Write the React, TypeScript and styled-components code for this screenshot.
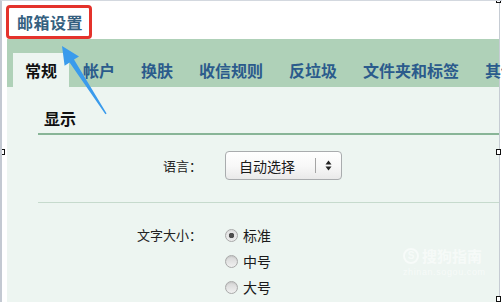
import React from "react";
import styled, { createGlobalStyle } from "styled-components";

const GlobalStyle = createGlobalStyle`
  html, body {
    margin: 0;
    padding: 0;
    background: #ffffff;
  }
  body {
    font-family: "Noto Sans CJK SC", "Noto Sans", sans-serif;
  }
`;

const Frame = styled.div`
  position: relative;
  width: 502px;
  height: 302px;
  overflow: hidden;
  box-sizing: border-box;
  border-top: 1px solid #d3d8df;
  border-left: 2px solid #c3c9d2;
  background: #ffffff;
`;

const Page = styled.div`
  width: 498px;
  height: 100%;
  box-sizing: border-box;
  border-right: 1px solid #c6ccd4;
  display: flex;
  flex-direction: column;
`;

const Header = styled.div`
  height: 38px;
  padding: 4px 0 0 4px;
  box-sizing: border-box;
  display: flex;
  align-items: flex-start;
`;

const TitleBox = styled.div`
  height: 34px;
  box-sizing: border-box;
  border: 3px solid #e4322b;
  border-radius: 4px;
  padding: 0 6px 0 8px;
  display: flex;
  align-items: center;
`;

const Title = styled.h1`
  margin: 0;
  font-size: 16px;
  font-weight: 700;
  color: #35607f;
  letter-spacing: 0.5px;
`;

const Main = styled.div`
  flex: 1;
  margin-left: 5px;
  display: flex;
  flex-direction: column;
`;

const TabBar = styled.div`
  height: 48px;
  box-sizing: border-box;
  padding: 14px 0 0 6px;
  background: #afd1b8;
  display: flex;
  align-items: flex-end;
  gap: 2px;
  white-space: nowrap;
`;

const Tab = styled.div<{ $active?: boolean }>`
  height: 34px;
  line-height: 34px;
  padding: 0 12px;
  font-size: 16px;
  font-weight: 700;
  color: ${(p) => (p.$active ? "#111111" : "#2b5b8c")};
  background: ${(p) => (p.$active ? "#edf5f1" : "transparent")};
`;

const Content = styled.div`
  flex: 1;
  background: #edf5f1;
  padding-left: 31px;
`;

const SectionHead = styled.div`
  padding: 20px 0 4px 6px;
  font-size: 16px;
  font-weight: 700;
  line-height: 22px;
  color: #111111;
  border-bottom: 2px solid #88b597;
`;

const Row = styled.div<{ $padTop: number; $padBottom: number; $divider?: boolean }>`
  display: grid;
  grid-template-columns: 164px 1fr;
  column-gap: 23px;
  padding-top: ${(p) => p.$padTop}px;
  padding-bottom: ${(p) => p.$padBottom}px;
  border-bottom: ${(p) => (p.$divider ? "1px solid #c6dacd" : "none")};
`;

const Label = styled.div<{ $h: number }>`
  text-align: right;
  font-size: 13px;
  line-height: ${(p) => p.$h}px;
  color: #222222;
`;

const Select = styled.div`
  width: 117px;
  height: 29px;
  box-sizing: border-box;
  border: 1px solid #a9acae;
  border-radius: 4px;
  background: linear-gradient(#ffffff, #f7f7f7 55%, #e9e9e9);
  display: flex;
  align-items: center;
  padding-left: 13px;
  font-size: 14px;
  color: #1a1a1a;
`;

const SelectText = styled.span`
  flex: 1;
`;

const SelectSep = styled.span`
  width: 1px;
  height: 15px;
  background: #a5a5a5;
  margin-right: 9px;
`;

const Arrows = styled.svg`
  margin-right: 9px;
`;

const Options = styled.div`
  display: flex;
  flex-direction: column;
`;

const Option = styled.label`
  height: 26px;
  display: flex;
  align-items: center;
  gap: 5px;
  font-size: 14px;
  color: #1a1a1a;
`;

const Radio = styled.span<{ $checked?: boolean }>`
  width: 13px;
  height: 13px;
  box-sizing: border-box;
  border-radius: 50%;
  border: 1px solid #a9a9a9;
  background: ${(p) =>
    p.$checked
      ? "radial-gradient(circle, #4d4d4d 0 2.5px, #e4e4e4 3px, #f4f4f4 100%)"
      : "linear-gradient(#d6d6d6, #f0f0f0)"};
  box-shadow: inset 0 1px 1px rgba(0, 0, 0, 0.08);
`;

const Arrow = styled.svg`
  position: absolute;
  left: 0;
  top: 0;
  pointer-events: none;
`;

const Watermark = styled.div`
  position: absolute;
  left: 401px;
  top: 246px;
  color: rgba(255, 255, 255, 0.55);
  display: flex;
  flex-direction: column;
  gap: 2px;
`;

const MarkTop = styled.div`
  display: flex;
  align-items: center;
  gap: 3px;
  font-size: 15px;
  font-weight: 700;
  line-height: 18px;
`;

const MarkLogo = styled.span`
  width: 16px;
  height: 16px;
  border-radius: 50%;
  border: 2px solid rgba(255, 255, 255, 0.55);
  box-sizing: border-box;
  font-size: 10px;
  line-height: 12px;
  text-align: center;
  font-family: "Liberation Sans", sans-serif;
`;

const MarkUrl = styled.div`
  font-size: 9px;
  letter-spacing: 0.6px;
  font-family: "Liberation Sans", sans-serif;
`;

const Handle = styled.span<{ $x: number; $y: number }>`
  position: absolute;
  left: ${(p) => p.$x}px;
  top: ${(p) => p.$y}px;
  width: 3px;
  height: 4px;
  border: 1px solid #111;
  background: #fff;
`;

const tabs = ["常规", "帐户", "换肤", "收信规则", "反垃圾", "文件夹和标签", "其他"];

export default function App() {
  return (
    <Frame>
      <GlobalStyle />
      <Page>
        <Header>
          <TitleBox>
            <Title>邮箱设置</Title>
          </TitleBox>
        </Header>
        <Main>
          <TabBar>
            {tabs.map((t, i) => (
              <Tab key={t} $active={i === 0}>
                {t}
              </Tab>
            ))}
          </TabBar>
          <Content>
            <SectionHead>显示</SectionHead>
            <Row $padTop={16} $padBottom={22} $divider>
              <Label $h={29}>语言：</Label>
              <Select>
                <SelectText>自动选择</SelectText>
                <SelectSep />
                <Arrows width="7" height="11" viewBox="0 0 7 11">
                  <path d="M3.5 0.5 L6.5 4.5 H0.5 Z" fill="#222" />
                  <path d="M0.5 6.5 H6.5 L3.5 10.5 Z" fill="#222" />
                </Arrows>
              </Select>
            </Row>
            <Row $padTop={19} $padBottom={0}>
              <Label $h={26}>文字大小：</Label>
              <Options>
                <Option>
                  <Radio $checked />
                  标准
                </Option>
                <Option>
                  <Radio />
                  中号
                </Option>
                <Option>
                  <Radio />
                  大号
                </Option>
              </Options>
            </Row>
          </Content>
        </Main>
      </Page>
      <Arrow width="502" height="302" viewBox="0 0 502 302">
        <polygon
          points="60,45 77,55.5 72,58.6 104.6,112.6 103.4,113.3 67.6,61.5 62.6,64.8"
          fill="#3a9bec"
        />
      </Arrow>
      <Watermark>
        <MarkTop>
          <MarkLogo>S</MarkLogo>
          搜狗指南
        </MarkTop>
        <MarkUrl>zhinan.sogou.com</MarkUrl>
      </Watermark>
      <Handle $x={-2} $y={148} />
      <Handle $x={494} $y={148} />
      <Handle $x={494} $y={-4} />
      <Handle $x={494} $y={295} />
    </Frame>
  );
}
